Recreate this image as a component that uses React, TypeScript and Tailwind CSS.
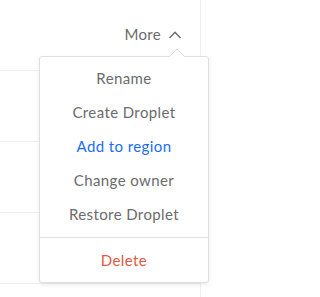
import React from "react";

const items = [
  { label: "Rename", cls: "text-[#6b6b6b]" },
  { label: "Create Droplet", cls: "text-[#6b6b6b]" },
  { label: "Add to region", cls: "text-[#1a6cf5]" },
  { label: "Change owner", cls: "text-[#6b6b6b]" },
  { label: "Restore Droplet", cls: "text-[#6b6b6b]" },
];

export default function App() {
  return (
    <div
      className="relative w-[242px] h-[297px] bg-white overflow-hidden tracking-[0.4px]"
      style={{ fontFamily: "Lato, 'Open Sans', sans-serif" }}
    >
      <div className="w-[201px] h-[297px] border-r border-[#efefef] flex flex-col">
        <div className="h-[71px] shrink-0 border-b border-[#efefef] flex items-start justify-end pr-[19px] pt-[24px]">
          <span className="text-[15px] leading-[20px] text-[#6b6b6b] tracking-[0.3px]">More</span>
          <svg width="12" height="8" viewBox="0 0 12 8" className="ml-[8px] mt-[7px]" fill="none">
            <path d="M0.5 7L6 1.3L11.5 7" stroke="#6b6b6b" strokeWidth="1.4" />
          </svg>
        </div>
        <div className="h-[71px] shrink-0 border-b border-[#efefef]" />
        <div className="h-[71px] shrink-0 border-b border-[#efefef]" />
        <div className="h-[71px] shrink-0 border-b border-[#efefef]" />
      </div>

      <div className="absolute left-[39px] top-[56px] w-[170px] bg-white border border-[#dfdfdf] rounded-[3px] shadow-[0_2px_4px_rgba(0,0,0,0.08)]">
        <svg
          width="16"
          height="9"
          viewBox="0 0 16 9"
          className="absolute left-[129px] top-[-9px]"
        >
          <path d="M0 9L8 1L16 9Z" fill="white" />
          <path d="M0 9L8 1L16 9" fill="none" stroke="#dfdfdf" strokeWidth="1" />
        </svg>
        <div className="flex flex-col pt-[4px]">
          {items.map((it) => (
            <div
              key={it.label}
              className={`h-[34px] flex items-center justify-center text-[15px] ${it.cls}`}
            >
              {it.label}
            </div>
          ))}
        </div>
        <div className="mt-[6px] border-t border-[#e3e3e3]" />
        <div className="h-[44px] flex items-center justify-center text-[15px] text-[#e0583f]">
          Delete
        </div>
      </div>
    </div>
  );
}
